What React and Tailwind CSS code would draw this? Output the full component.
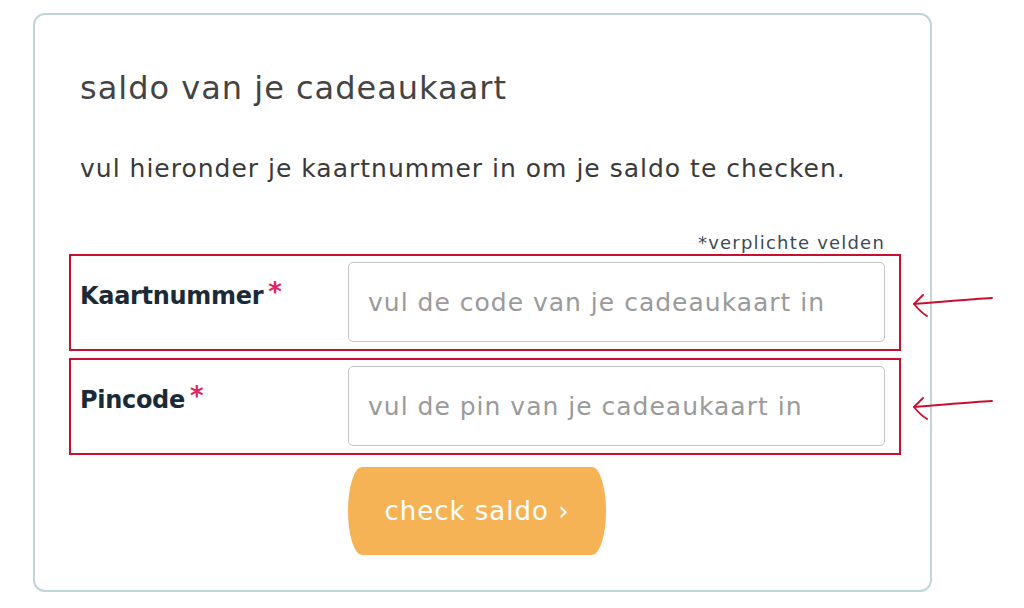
import { useState } from 'react';

function Arrow({ className }) {
  return (
    <svg className={className} width="84" height="30" viewBox="0 0 84 30" fill="none" stroke="#c8102e" strokeWidth="1.8" strokeLinecap="round" strokeLinejoin="round">
      <path d="M81 4 C 60 5, 30 8, 3 10" />
      <path d="M12 1 C 9 4, 6 7, 3 10 C 7 15, 11 19, 16 22" />
    </svg>
  );
}

function Field({ label, placeholder, value, onChange }) {
  return (
    <div className="flex border-2 border-[#c8102e] pl-[9px] pr-[14px] pt-[6px] pb-[7px]">
      <label className="w-[268px] shrink-0 pt-[16px] text-[24px] font-bold text-[#1b2a38] font-['DejaVu_Sans','Liberation_Sans',sans-serif] tracking-[-0.3px]">
        {label}
        <span className="text-[#e0245e] ml-[5px] align-top text-[26px] leading-[28px]">*</span>
      </label>
      <input
        className="h-[80px] flex-1 rounded-[5px] border border-[#c4c4c4] px-[19px] text-[25px] tracking-[1px] text-[#333] placeholder:text-[#9a9a9a] outline-none font-['DejaVu_Sans','Liberation_Sans',sans-serif]"
        placeholder={placeholder}
        value={value}
        onChange={(e) => onChange(e.target.value)}
      />
    </div>
  );
}

export default function App() {
  const [code, setCode] = useState('');
  const [pin, setPin] = useState('');

  return (
    <div className="relative min-h-[608px] w-[1024px] bg-white pt-[13px] pl-[33px] font-['DejaVu_Sans','Liberation_Sans',sans-serif]">
      <div className="w-[899px] h-[579px] rounded-[12px] border-2 border-[#bfd5da] pt-[53px] pl-[34px]">
        <h1 className="pl-[11px] text-[32px] tracking-[1px] leading-[40px] text-[#444] font-normal">saldo van je cadeaukaart</h1>
        <p className="pl-[11px] mt-[45px] text-[25px] tracking-[1px] leading-[32px] text-[#3a3a3a]">
          vul hieronder je kaartnummer in om je saldo te checken.
        </p>
        <div className="w-[832px] mt-[46px]">
          <div className="text-right pr-[16px] text-[18px] tracking-[1.2px] leading-[23px] text-[#3d4a55]">*verplichte velden</div>
          <Field label="Kaartnummer" placeholder="vul de code van je cadeaukaart in" value={code} onChange={setCode} />
          <div className="h-[7px]" />
          <Field label="Pincode" placeholder="vul de pin van je cadeaukaart in" value={pin} onChange={setPin} />
          <div className="pl-[279px] pt-[12px]">
            <button className="h-[88px] w-[258px] rounded-[14px/50%] bg-[#f6b356] text-white text-[26px] tracking-[1px]">
              check saldo ›
            </button>
          </div>
        </div>
      </div>
      <Arrow className="absolute left-[911px] top-[294px]" />
      <Arrow className="absolute left-[911px] top-[397px]" />
    </div>
  );
}
